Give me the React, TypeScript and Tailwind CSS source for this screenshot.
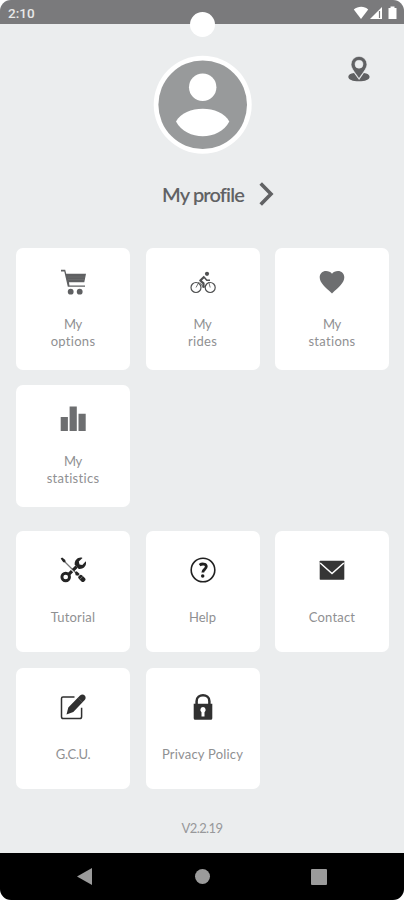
import React from "react";

type Item = { icon: React.ReactNode; lines: { text: string; tracking: string }[] };

function Icon({ children, color }: { children: React.ReactNode; color: string }) {
  return (
    <svg width="26" height="26" viewBox="0 0 26 26" className={`block shrink-0 ${color}`} fill="currentColor">
      {children}
    </svg>
  );
}

const cart = (
  <Icon color="text-[#5f6062]">
    <path d="M1 .8h4.200l1 3.900H26l-1.700 8.500H9l.4 3.200H25v1.400H7.800L4.300 2.400H1z" />
    <circle cx="10.700" cy="22.700" r="2.900" />
    <circle cx="19.700" cy="22.700" r="2.900" />
    <path d="M8 8h17M8 10.500h16" stroke="#777" strokeWidth=".5" />
  </Icon>
);

const cyclist = (
  <Icon color="text-[#4f5051]">
    <circle cx="17" cy="4.800" r="2.100" />
    <g fill="none" stroke="currentColor">
      <circle cx="6" cy="18.500" r="5" strokeWidth="1.200" />
      <circle cx="20.200" cy="18.500" r="5" strokeWidth="1.200" />
      <path d="M14.500 7.500 10.300 11.500l3.200 2.800v4.500" strokeWidth="2.200" strokeLinejoin="round" />
      <path d="M14.200 8.300l2.600 3h3.200" strokeWidth="1.500" />
      <path d="M6 18.500l3-5.500M14 18.500l4.700-5.500 1.500 5.500M10 13.500l3.500 5" strokeWidth=".8" />
    </g>
  </Icon>
);

const heart = (
  <Icon color="text-[#6d6e70]">
    <path d="M13 24.500C6 17.800.700 14 .700 8.300.700 4.500 3.500 2 7 2c2.500 0 4.800 1 6 2.800C14.200 3 16.500 2 19 2c3.500 0 6.300 2.500 6.300 6.300 0 5.700-5.300 9.500-12.300 16.200z" />
  </Icon>
);

const bars = (
  <Icon color="text-[#6d6e70]">
    <path d="M.700 11h7.200v14H.700zM9.600.500h7.200V25H9.600zM18.500 7.700h7.200V25h-7.200z" />
  </Icon>
);

const tools = (
  <Icon color="text-[#252525]">
    <path d="M2 2l14 14" stroke="#777" strokeWidth="1.200" />
    <path d="M.700 1.500 2.200.600l3.100 2.300.2 2.300-2.200.1z" />
    <path d="M8.500 17.700 17 9.200" fill="none" stroke="currentColor" strokeWidth="3.200" strokeDasharray="5 1.500" />
    <path d="M14.700 7.800c-.5-4.500 3.500-8.300 7.800-6.900L18.800 4.600l.7 2.800 2.800.7 3.500-3.800c1.200 4.500-2.500 8.400-7 7.700z" />
    <circle cx="5.700" cy="20" r="3.800" fill="none" stroke="currentColor" strokeWidth="2.900" />
    <path d="M15 15.200l1.700-.9 3 2.700-1.500 1.800-2.500-.6z" />
    <rect x="18" y="19" width="7.700" height="4.800" rx="2" transform="rotate(45 21.850 21.400)" />
    <path d="M19.400 22.700l3.300-3.200" stroke="#999" strokeWidth=".7" />
  </Icon>
);

const help = (
  <Icon color="text-[#202020]">
    <circle cx="13" cy="13" r="11.800" fill="none" stroke="currentColor" strokeWidth="1.600" />
    <path d="M9.600 8.100c2-1.500 6.500-1.800 6.700 1.300.2 2.900-3.500 3-3.500 6" fill="none" stroke="currentColor" strokeWidth="2.800" />
    <circle cx="12.700" cy="19.100" r="1.750" />
  </Icon>
);

const mail = (
  <Icon color="text-[#353535]">
    <rect x=".7" y="3.700" width="24.600" height="19" rx=".6" />
    <path d="M1.200 6 13 16.500 24.800 6" fill="none" stroke="#fff" strokeWidth="1.500" />
  </Icon>
);

const edit = (
  <Icon color="text-[#303030]">
    <path d="M14.500 3H3Q1.500 3 1.500 4.500v18.200Q1.500 24.500 3.300 24.500h16.500q1.800 0 1.800-1.800v-9" fill="none" stroke="currentColor" strokeWidth="1.500" />
    <path d="M6.500 20.500 8.300 13.500 20 1.600c1.400-1.500 3.500-1.400 4.700-.2 1.200 1.200 1.300 3.200 0 4.500L13.300 18z" />
    <path d="M18.500 4.300 22.200 8" stroke="#777" strokeWidth=".5" />
  </Icon>
);

const lock = (
  <Icon color="text-[#303030]">
    <path d="M6.600 11V7.200C6.600-.600 19.400-.600 19.400 7.200V11" fill="none" stroke="currentColor" strokeWidth="2.500" />
    <path fillRule="evenodd" d="M3.700 9.700h18.600v14.500q0 1.500-1.500 1.500H5.200q-1.500 0-1.500-1.500zM13 13a2.900 2.900 0 0 0-1.500 5.200V22.500h3v-4.300A2.900 2.900 0 0 0 13 13z" />
  </Icon>
);

const personal: Item[] = [
  { icon: cart, lines: [{ text: "My", tracking: "tracking-[-0.4px]" }, { text: "options", tracking: "tracking-[0.3px]" }] },
  { icon: cyclist, lines: [{ text: "My", tracking: "tracking-[-0.4px]" }, { text: "rides", tracking: "tracking-[0.3px]" }] },
  { icon: heart, lines: [{ text: "My", tracking: "tracking-[-0.4px]" }, { text: "stations", tracking: "tracking-[0.3px]" }] },
  { icon: bars, lines: [{ text: "My", tracking: "tracking-[-0.4px]" }, { text: "statistics", tracking: "tracking-[0.3px]" }] },
];

const support: Item[] = [
  { icon: tools, lines: [{ text: "Tutorial", tracking: "tracking-[0.2px]" }] },
  { icon: help, lines: [{ text: "Help", tracking: "" }] },
  { icon: mail, lines: [{ text: "Contact", tracking: "tracking-[0.2px]" }] },
  { icon: edit, lines: [{ text: "G.C.U.", tracking: "tracking-[-0.3px]" }] },
  { icon: lock, lines: [{ text: "Privacy Policy", tracking: "tracking-[0.2px]" }] },
];

function Tile({ item }: { item: Item }) {
  const single = item.lines.length === 1;
  return (
    <button className={`flex h-[121.5px] flex-col items-center rounded-[7px] bg-white ${single ? "pt-[26px]" : "pt-[20.5px]"}`}>
      {item.icon}
      <span className={`flex flex-col items-center text-[13px] leading-[17.5px] text-[#8f9092] ${single ? "mt-[26.5px]" : "mt-[21px]"}`}>
        {item.lines.map((l) => (
          <span key={l.text} className={`whitespace-nowrap ${l.tracking}`}>{l.text}</span>
        ))}
      </span>
    </button>
  );
}

export default function App() {
  return (
    <div className="h-[900px] w-[404px] overflow-hidden bg-white font-['Lato',sans-serif]">
      <div className="relative flex h-full flex-col overflow-hidden rounded-[11px] bg-[#ebedee]">
        <header className="flex h-6 shrink-0 items-center justify-between bg-[#7a7a7c] pl-2 pr-[6px] font-['Roboto',sans-serif] text-[13.5px] font-medium text-[#e8e8e8]">
          <span className="pt-[2px]">2:10</span>
          <svg width="45" height="14" viewBox="0 0 45 14" fill="#fff" className="mt-px">
            <path d="M.8 3.500C5-.2 11.500-.2 15.200 3.500L8 13z" />
            <path d="M29 1v12H17z" />
            <path d="M26.500 5v7" stroke="#7a7a7c" strokeWidth="1.200" />
            <path d="M35.500 2H37.500V.600h4V2h2v11h-8z" />
          </svg>
        </header>
        <div className="absolute left-[190px] top-[12px] size-[25px] rounded-full bg-white" />

        <section className="flex h-[224.4px] shrink-0 flex-col">
          <div className="grid h-[131px] grid-cols-[153px_99px_152px] items-start pt-[31px]">
            <span />
            <svg width="99" height="99" viewBox="0 0 99 99">
              <circle cx="49.700" cy="49.700" r="49" fill="#fff" />
              <circle cx="49.700" cy="49.700" r="44.300" fill="#989a9b" />
              <circle cx="49.700" cy="32.200" r="13.700" fill="#fff" />
              <path d="M23 66.500C32 49.500 67.500 49.500 76.300 66.500 66 86.200 33.500 86.200 23 66.500z" fill="#fff" />
            </svg>
            <svg width="22" height="26" viewBox="0 0 22 26" className="ml-[96px] mt-px" fill="#606163">
              <path d="M6 17C2.500 17.500.3 18.800.3 20.700c0 2.800 4.300 4.600 10.600 4.600s10.700-1.800 10.700-4.600c0-1.900-2.200-3.200-5.700-3.700l-4.800 7z" />
              <path fillRule="evenodd" stroke="#ebedee" strokeWidth=".5" d="M11 .4A7.900 7.900 0 0 0 3.100 8.300c0 4.200 5.200 9.900 7.900 14.200 2.700-4.300 7.900-10 7.900-14.200A7.900 7.900 0 0 0 11 .4zm0 3.900a4 4 0 1 1 0 8A4 4 0 0 1 11 4.300z" />
            </svg>
          </div>
          <button className="ml-[162px] mt-[24px] flex h-[30px] w-[112px] items-center justify-between text-[#616264]">
            <span className="whitespace-nowrap text-[20px] font-semibold leading-[30px] tracking-[-0.85px]">My profile</span>
            <svg width="15" height="24" viewBox="0 0 15 24" fill="none" stroke="currentColor" strokeWidth="3.600">
              <path d="M1.700 1.500 12 12 1.700 22.500" />
            </svg>
          </button>
        </section>

        <main className="flex flex-col gap-[24px] pl-4 pr-[15px]">
          <section className="grid grid-cols-3 gap-[15.500px]">
            {personal.map((i) => <Tile key={i.lines[1].text} item={i} />)}
          </section>
          <section className="grid grid-cols-3 gap-[15.500px]">
            {support.map((i) => <Tile key={i.lines[0].text} item={i} />)}
          </section>
        </main>
        <p className="mt-[30px] text-center text-[13px] leading-[18px] tracking-[-0.6px] text-[#97989a]">V2.2.19</p>

        <nav className="mt-auto flex h-[47px] shrink-0 items-center bg-black pl-[77px]">
          <svg width="15" height="17" viewBox="0 0 15 17" fill="#9b9b9b"><path d="M0 8.500 15 0v17z" /></svg>
          <span className="ml-[103px] size-[15px] rounded-full bg-[#9b9b9b]" />
          <span className="ml-[101px] size-4 rounded-[1px] bg-[#9b9b9b]" />
        </nav>
      </div>
    </div>
  );
}
